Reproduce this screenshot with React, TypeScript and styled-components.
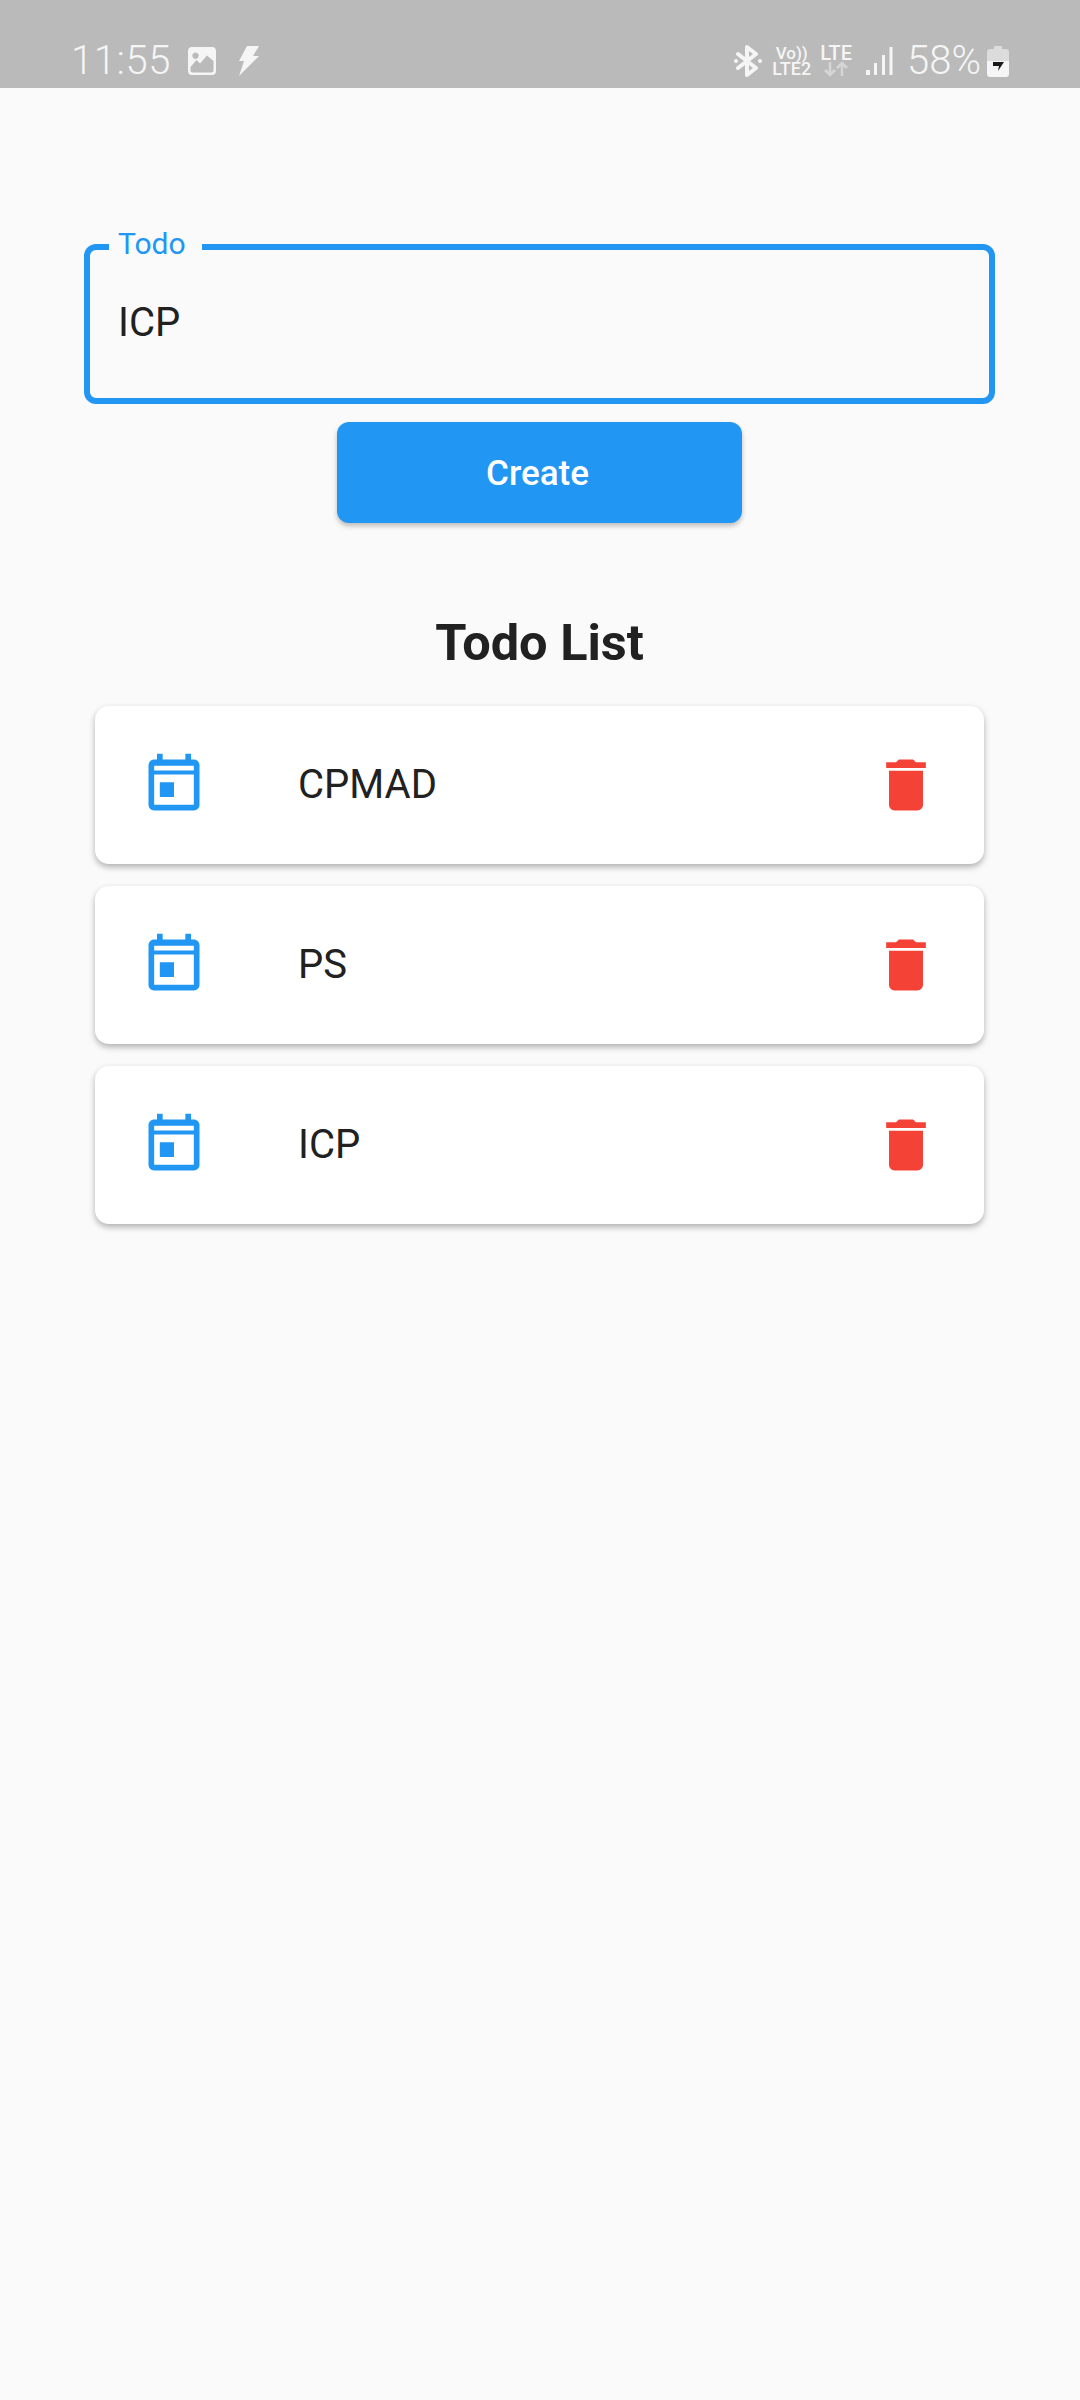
import React from "react";
import styled, { createGlobalStyle } from "styled-components";

const Global = createGlobalStyle`
  html, body { margin: 0; padding: 0; background: #fafafa; }
  body { font-family: Roboto, "Liberation Sans", sans-serif; }
  * { box-sizing: border-box; }
`;

const Screen = styled.div`
  width: 1080px;
  height: 2400px;
  background: #fafafa;
  display: flex;
  flex-direction: column;
  overflow: hidden;
`;

const StatusBar = styled.div`
  height: 88px;
  background: #bababa;
  color: #f5f5f5;
  display: flex;
  align-items: flex-end;
  justify-content: space-between;
  padding: 0 71px 10px 71px;
`;

const StatusGroup = styled.div`
  display: flex;
  align-items: center;
  height: 34px;
`;

const Clock = styled.span`
  font-size: 40px;
  font-weight: 300;
  line-height: 34px;
  letter-spacing: 0.6px;
  margin-right: 16px;
`;

const GlyphIcon = styled.svg<{ $gap?: number }>`
  display: block;
  flex: none;
  margin-right: ${(p) => p.$gap ?? 0}px;
`;

const NetStack = styled.div<{ $gap: number }>`
  display: flex;
  flex-direction: column;
  align-items: center;
  margin-right: ${(p) => p.$gap}px;
`;

const NetLabel = styled.span<{ $size: number }>`
  font-size: ${(p) => p.$size}px;
  font-weight: 500;
  line-height: 16px;
  white-space: nowrap;
`;

const Battery = styled.span`
  font-size: 40px;
  font-weight: 300;
  line-height: 34px;
  margin-right: 6px;
`;

const Content = styled.main`
  display: flex;
  flex-direction: column;
  align-items: center;
  padding: 156px 0 0;
`;

const Field = styled.div`
  position: relative;
  width: 911px;
  margin-right: 1px;
  height: 160px;
  border: 6px solid #2196f3;
  border-radius: 12px;
  display: flex;
  align-items: center;
  padding: 0 0 2px 28px;
`;

const FieldLabel = styled.label`
  position: absolute;
  top: -26px;
  left: 19px;
  padding: 0 16px 0 9px;
  background: #fafafa;
  color: #2196f3;
  font-size: 30px;
  line-height: 40px;
`;

const FieldValue = styled.span`
  color: #212121;
  font-size: 40px;
  line-height: 48px;
`;

const CreateButton = styled.button`
  width: 405px;
  height: 101px;
  margin: 18px 1px 0 0;
  padding: 2px 4px 0 0;
  border: 0;
  border-radius: 12px;
  background: #2196f3;
  color: #fff;
  font-family: Roboto, sans-serif;
  font-size: 35px;
  font-weight: 500;
  box-shadow: 0 3px 5px rgba(0, 0, 0, 0.25);
`;

const Heading = styled.h1`
  margin: 89px 1px 0 0;
  color: #212121;
  font-size: 50.500px;
  font-weight: 700;
  line-height: 62px;
`;

const List = styled.div`
  width: 889px;
  margin: 32px 1px 0 0;
  display: flex;
  flex-direction: column;
  gap: 22px;
`;

const Card = styled.div`
  height: 158px;
  background: #fff;
  border-radius: 14px;
  box-shadow: 0 3px 6px rgba(0, 0, 0, 0.3);
  display: flex;
  align-items: center;
  padding: 0 44px 0 45px;
`;

const CardTitle = styled.span`
  flex: 1;
  margin-left: 90px;
  color: #212121;
  font-size: 40px;
  line-height: 48px;
`;

const CardIcon = styled.svg<{ $color: string }>`
  display: block;
  flex: none;
  fill: ${(p) => p.$color};
`;

const items = ["CPMAD", "PS", "ICP"];

export default function App() {
  return (
    <Screen>
      <Global />
      <StatusBar>
        <StatusGroup>
          <Clock>11:55</Clock>
          <GlyphIcon width="30" height="30" viewBox="0 0 30 30" $gap={21}>
            <path fill="#f5f5f5" fillRule="evenodd" d="M5 1h20a4 4 0 0 1 4 4v20a4 4 0 0 1-4 4H5a4 4 0 0 1-4-4V5a4 4 0 0 1 4-4zM8.500 6.500a3.200 3.200 0 1 0 0.010 0zM3.500 21v3.500a2 2 0 0 0 2 2h19a2 2 0 0 0 2-2V15l-6.500-5.500-7 8-3.500-3.500z" />
          </GlyphIcon>
          <GlyphIcon width="22" height="32" viewBox="0 0 22 32">
            <path fill="#f5f5f5" d="M9 1h12l-6 10h6L1 31l5-15H1z" />
          </GlyphIcon>
        </StatusGroup>
        <StatusGroup>
          <GlyphIcon width="28" height="32" viewBox="0 0 28 32" $gap={10}>
            <path fill="none" stroke="#f5f5f5" strokeWidth="4" strokeLinecap="round" strokeLinejoin="round" d="M4 9l18 14-9 7V2l9 7L4 23" />
            <circle cx="2" cy="16" r="2" fill="#f5f5f5" />
            <circle cx="26" cy="16" r="2" fill="#f5f5f5" />
          </GlyphIcon>
          <NetStack $gap={9}>
            <NetLabel $size={17}>Vo))</NetLabel>
            <NetLabel $size={18}>LTE2</NetLabel>
          </NetStack>
          <NetStack $gap={13}>
            <NetLabel $size={20}>LTE</NetLabel>
            <GlyphIcon width="24" height="16" viewBox="0 0 24 16">
              <path fill="none" stroke="#d6d6d6" strokeWidth="2.500" d="M6 1v13M1 9l5 5 5-5M18 15V2M13 7l5-5 5 5" />
            </GlyphIcon>
          </NetStack>
          <GlyphIcon width="28" height="32" viewBox="0 0 28 32" $gap={14}>
            <path fill="#f5f5f5" d="M1 25h4v5H1zM9 18h3v12H9zM17 10h3v20h-3zM24.500 2h3v28h-3z" />
          </GlyphIcon>
          <Battery>58%</Battery>
          <GlyphIcon width="22" height="32" viewBox="0 0 22 32">
            <path fill="#dcdcdc" d="M7 1h8v3h4a3 3 0 0 1 3 3v9H0V7a3 3 0 0 1 3-3h4z" />
            <path fill="#f5f5f5" d="M0 16h22v13a3 3 0 0 1-3 3H3a3 3 0 0 1-3-3z" />
            <path fill="#1a1a1a" d="M6 17h11l-6 9 1-5H6z" />
          </GlyphIcon>
        </StatusGroup>
      </StatusBar>
      <Content>
        <Field>
          <FieldLabel>Todo</FieldLabel>
          <FieldValue>ICP</FieldValue>
        </Field>
        <CreateButton>Create</CreateButton>
        <Heading>Todo List</Heading>
        <List>
          {items.map((t) => (
            <Card key={t}>
              <CardIcon width="68" height="68" viewBox="0 0 24 24" $color="#2196f3">
                <path fillRule="evenodd" d="M19 3h-1V1h-2v2H8V1H6v2H5c-1.100 0-2 .9-2 2v14c0 1.100.9 2 2 2h14c1.100 0 2-.9 2-2V5c0-1.100-.9-2-2-2zM5 5.200h14v1.700H5zM5 8.300h14V19H5zM7 11h5v5.200H7z" />
              </CardIcon>
              <CardTitle>{t}</CardTitle>
              <CardIcon width="68" height="68" viewBox="0 0 24 24" $color="#f44336">
                <path d="M6 19c0 1.100.9 2 2 2h8c1.100 0 2-.9 2-2V7H6v12zM19 4h-3.500l-1-1h-5l-1 1H5v2h14V4z" />
              </CardIcon>
            </Card>
          ))}
        </List>
      </Content>
    </Screen>
  );
}
